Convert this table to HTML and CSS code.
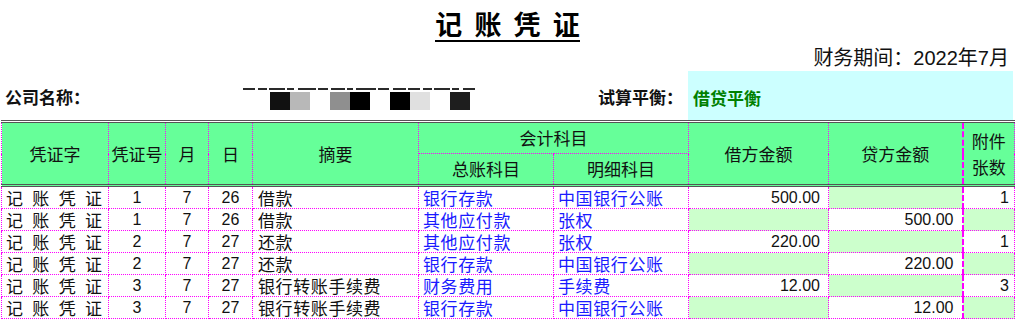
FILE: index.html
```html
<!DOCTYPE html>
<html lang="zh-CN">
<head>
<meta charset="utf-8">
<title>记账凭证</title>
<link rel="stylesheet" href="styles.css">
</head>
<body>
<div class="sheet">
  <div class="title-row"><h1 class="title">记 账 凭 证</h1></div>
  <div class="period-row">财务期间：2022年7月</div>
  <div class="info-row">
    <div class="label company-label">公司名称：</div>
    <div class="company-name">
      <svg width="232" height="22" viewBox="0 0 232 22">
        <line x1="0" y1="1" x2="232" y2="1" stroke="#2a2a2a" stroke-width="2" stroke-dasharray="12 3 9 2 16 2 7 4 18 2 10 3 14 2 6 3 20 2 11 4 13 2"/>
        <rect x="27" y="4" width="20" height="18" fill="#111"/>
        <rect x="47" y="4" width="20" height="18" fill="#b8b8b8"/>
        <rect x="87" y="4" width="20" height="18" fill="#8f8f8f"/>
        <rect x="107" y="4" width="20" height="18" fill="#000"/>
        <rect x="147" y="4" width="20" height="18" fill="#000"/>
        <rect x="167" y="4" width="20" height="18" fill="#e0e0e0"/>
        <rect x="207" y="4" width="20" height="18" fill="#1e1e1e"/>
      </svg>
    </div>
    <div class="label balance-label">试算平衡：</div>
    <div class="balance-cell"><span class="balance-value">借贷平衡</span></div>
  </div>
  <table class="voucher">
    <colgroup>
      <col class="c-type"><col class="c-no"><col class="c-m"><col class="c-d"><col class="c-sum">
      <col class="c-gl"><col class="c-sub"><col class="c-dr"><col class="c-cr"><col class="c-att">
    </colgroup>
    <thead>
      <tr class="h1">
        <th rowspan="2">凭证字</th>
        <th rowspan="2">凭证号</th>
        <th rowspan="2">月</th>
        <th rowspan="2">日</th>
        <th rowspan="2">摘要</th>
        <th colspan="2">会计科目</th>
        <th rowspan="2">借方金额</th>
        <th rowspan="2" class="cr">贷方金额</th>
        <th rowspan="2" class="att-h">附件<br>张数</th>
      </tr>
      <tr class="h2">
        <th>总账科目</th>
        <th>明细科目</th>
      </tr>
    </thead>
    <tbody>
      <tr>
        <td class="vt">记账凭证</td><td class="num">1</td><td class="num">7</td><td class="num">26</td>
        <td class="sum">借款</td><td class="acct">银行存款</td><td class="acct">中国银行公账</td>
        <td class="amt">500.00</td><td class="amt cr empty"></td><td class="att">1</td>
      </tr>
      <tr>
        <td class="vt">记账凭证</td><td class="num">1</td><td class="num">7</td><td class="num">26</td>
        <td class="sum">借款</td><td class="acct">其他应付款</td><td class="acct">张权</td>
        <td class="amt empty"></td><td class="amt cr">500.00</td><td class="att empty"></td>
      </tr>
      <tr>
        <td class="vt">记账凭证</td><td class="num">2</td><td class="num">7</td><td class="num">27</td>
        <td class="sum">还款</td><td class="acct">其他应付款</td><td class="acct">张权</td>
        <td class="amt">220.00</td><td class="amt cr empty"></td><td class="att">1</td>
      </tr>
      <tr>
        <td class="vt">记账凭证</td><td class="num">2</td><td class="num">7</td><td class="num">27</td>
        <td class="sum">还款</td><td class="acct">银行存款</td><td class="acct">中国银行公账</td>
        <td class="amt empty"></td><td class="amt cr">220.00</td><td class="att empty"></td>
      </tr>
      <tr>
        <td class="vt">记账凭证</td><td class="num">3</td><td class="num">7</td><td class="num">27</td>
        <td class="sum">银行转账手续费</td><td class="acct">财务费用</td><td class="acct">手续费</td>
        <td class="amt">12.00</td><td class="amt cr empty"></td><td class="att">3</td>
      </tr>
      <tr>
        <td class="vt">记账凭证</td><td class="num">3</td><td class="num">7</td><td class="num">27</td>
        <td class="sum">银行转账手续费</td><td class="acct">银行存款</td><td class="acct">中国银行公账</td>
        <td class="amt empty"></td><td class="amt cr">12.00</td><td class="att empty"></td>
      </tr>
    </tbody>
  </table>
</div>
</body>
</html>
```

FILE: styles.css
```css
html, body {
  margin: 0;
  padding: 0;
  background: #ffffff;
}

body {
  font-family: "Liberation Sans", "Noto Sans CJK SC", sans-serif;
  color: #111;
  overflow: hidden;
}

.sheet {
  width: 1015px;
}

.title-row {
  height: 45px;
  display: flex;
  justify-content: center;
  align-items: flex-start;
}

.title {
  margin: 10px 0 0 0;
  font-family: "Noto Sans CJK SC", sans-serif;
  font-size: 27px;
  font-weight: 700;
  line-height: 28px;
  word-spacing: 6px;
  padding-bottom: 2px;
  border-bottom: 2px solid #000;
  color: #000;
}

.period-row {
  height: 26px;
  box-sizing: border-box;
  padding: 3px 6px 0 0;
  text-align: right;
  font-family: "Liberation Sans", "Noto Sans CJK SC", sans-serif;
  font-size: 20px;
  line-height: 20px;
  color: #111;
}

.info-row {
  height: 49px;
  display: grid;
  grid-template-columns: 243px 240px 205px 325px;
  align-items: center;
}

.label {
  font-family: "Noto Sans CJK SC", sans-serif;
  font-size: 17px;
  font-weight: 700;
  line-height: 17px;
  color: #111;
  padding-top: 2px;
}

.company-label {
  padding-left: 5px;
}

.company-name {
  align-self: start;
  margin-top: 17px;
  height: 22px;
}

.company-name svg {
  display: block;
}

.balance-label {
  justify-self: end;
  padding-right: 5px;
}

.balance-cell {
  align-self: stretch;
  background: #ccffff;
  display: flex;
  align-items: center;
  padding-left: 5px;
}

.balance-value {
  font-family: "Noto Sans CJK SC", sans-serif;
  font-size: 17px;
  font-weight: 700;
  line-height: 17px;
  color: #008000;
  padding-top: 3px;
}

.voucher {
  margin-left: 1px;
  width: 1014px;
  table-layout: fixed;
  border-collapse: collapse;
  border-top: 3px double #555;
  font-size: 17px;
}

.c-type { width: 107px; }
.c-no { width: 57px; }
.c-m { width: 43px; }
.c-d { width: 44px; }
.c-sum { width: 166px; }
.c-gl { width: 135px; }
.c-sub { width: 135px; }
.c-dr { width: 140px; }
.c-cr { width: 134px; }
.c-att { width: 52px; }

.voucher th,
.voucher td {
  border: 1px dotted #ff00ff;
  padding: 0;
  white-space: nowrap;
}

.voucher th {
  background: #66ff99;
  font-family: "Noto Sans CJK SC", sans-serif;
  font-weight: 400;
  font-size: 17px;
  line-height: 20px;
  color: #111;
  text-align: center;
  vertical-align: middle;
}

.voucher thead tr.h1 th {
  height: 30px;
}

.voucher thead tr.h2 th {
  height: 30px;
  border-bottom: 3px double #555;
}

.voucher thead tr.h1 th[rowspan] {
  border-bottom: 3px double #555;
}

.voucher th.att-h {
  line-height: 26px;
  white-space: normal;
}

.voucher .cr {
  border-right: 2px dashed #ff00ff;
}

.voucher tbody tr {
  height: 22px;
}

.voucher td {
  height: 21px;
  line-height: 21px;
  vertical-align: middle;
  font-size: 16px;
}

.vt {
  font-family: "Noto Sans CJK SC", sans-serif;
  font-size: 17px !important;
  text-align: justify;
  text-align-last: justify;
  padding: 0 6px 0 4px !important;
}

.num {
  text-align: center;
}

.sum {
  font-family: "Noto Sans CJK SC", sans-serif;
  font-size: 17px !important;
  letter-spacing: 0.6px;
  padding-left: 5px !important;
}

.acct {
  font-family: "Noto Sans CJK SC", sans-serif;
  font-size: 17px !important;
  letter-spacing: 0.6px;
  color: #1a1aff;
  padding-left: 4px !important;
}

.amt {
  text-align: right;
  padding-right: 8px !important;
}

.att {
  text-align: right;
  padding-right: 5px !important;
}

.empty {
  background: #ccffcc;
}
```
